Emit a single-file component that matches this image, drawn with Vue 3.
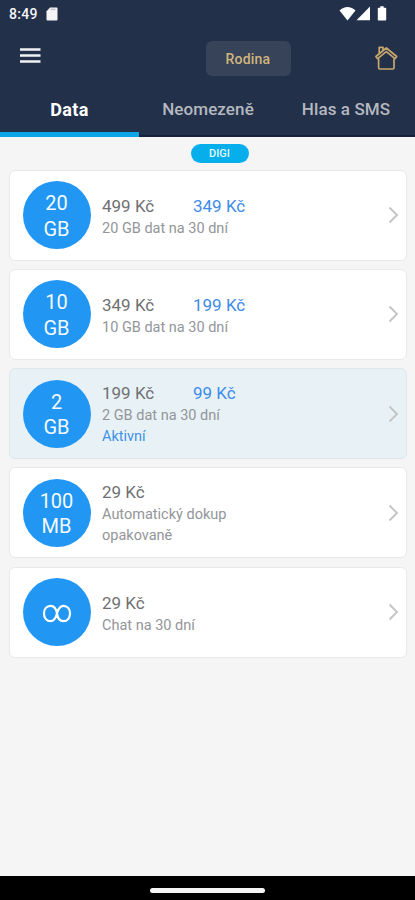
<script setup>
const tabs = ['Data', 'Neomezeně', 'Hlas a SMS']
const plans = [
  { amount: '20', unit: 'GB', price: '499 Kč', sale: '349 Kč', lines: ['20 GB dat na 30 dní'] },
  { amount: '10', unit: 'GB', price: '349 Kč', sale: '199 Kč', lines: ['10 GB dat na 30 dní'] },
  { amount: '2', unit: 'GB', price: '199 Kč', sale: '99 Kč', lines: ['2 GB dat na 30 dní'], status: 'Aktivní' },
  { amount: '100', unit: 'MB', price: '29 Kč', lines: ['Automatický dokup', 'opakovaně'] },
  { infinite: true, price: '29 Kč', lines: ['Chat na 30 dní'] },
]
const isTall = (plan) => plan.lines.length > 1 || Boolean(plan.status)
</script>

<template>
  <div class="screen">
    <header class="header">
      <div class="status-bar">
        <span class="clock">8:49</span>
        <svg class="sd" width="12" height="14" viewBox="0 0 12 14"><path d="M4 .5h6.5a1 1 0 0 1 1 1v11a1 1 0 0 1-1 1h-9a1 1 0 0 1-1-1V4.200z" fill="#f5f5f6" /><path d="M4.500 2.400h5" stroke="#c4c6ca" stroke-width="1.600" /></svg>
        <svg class="signals" width="50" height="16" viewBox="0 0 50 16" fill="#fff">
          <path d="M0.500 4.500C5-.2 12-.2 16.500 4.500L8.500 14.500z" />
          <path d="M31 .5v13.800H17.500z" />
          <path d="M39.800 1.800h1.500V.3h3.400v1.500h1.500c.6 0 1 .4 1 1v10.700c0 .6-.4 1-1 1h-6.400c-.6 0-1-.4-1-1V2.800c0-.6.4-1 1-1z" />
        </svg>
      </div>
      <div class="toolbar">
        <svg class="menu" width="22" height="17" viewBox="0 0 22 17"><path d="M0 2.500h20.500M0 8.500h20.500M0 14.500h20.500" stroke="#f1f1f4" stroke-width="2.600" /></svg>
        <button class="family">Rodina</button>
        <svg class="home" width="24" height="26" viewBox="0 0 24 26" fill="none" stroke="#c9a66c" stroke-width="1.700" stroke-linejoin="round">
          <path d="M4.600 13.500v9.300q0 1.200 1.200 1.200h13q1.200 0 1.200-1.200v-9.300" />
          <path d="M12.300 3L1.900 11.500l1.700 2.200 8.700-7.100 8.700 7.100 1.700-2.200z" />
          <path d="M5.200 8.500V2.300h3.800v3.100" />
        </svg>
      </div>
      <nav class="tabs">
        <div v-for="(tab, i) in tabs" :key="tab" class="tab" :class="{ current: i === 0 }"><span>{{ tab }}</span></div>
      </nav>
    </header>
    <main class="content">
      <span class="brand">DIGI</span>
      <section class="plans">
        <article v-for="(plan, i) in plans" :key="i" class="card" :class="{ active: plan.status }">
          <div class="badge">
            <svg v-if="plan.infinite" width="30" height="20" viewBox="0 0 30 20"><path d="M15 9.500C14.300 4.500 12 1.800 8.500 1.800C4.700 1.800 2 5 2 9.500s2.700 7.700 6.500 7.700c3.500 0 5.300-3 6.500-7.700s3-7.700 6.500-7.700c3.800 0 6.500 3.200 6.500 7.700s-2.700 7.700-6.500 7.700c-3.500 0-5.800-2.700-6.500-7.700z" fill="none" stroke="#fff" stroke-width="2.200" /></svg>
            <template v-else><span>{{ plan.amount }}</span><span>{{ plan.unit }}</span></template>
          </div>
          <div class="details" :class="{ tall: isTall(plan) }">
            <div class="prices"><span class="price">{{ plan.price }}</span><span v-if="plan.sale" class="sale">{{ plan.sale }}</span></div>
            <div v-for="line in plan.lines" :key="line" class="line">{{ line }}</div>
            <div v-if="plan.status" class="line state">{{ plan.status }}</div>
          </div>
          <svg class="chevron" width="11" height="18" viewBox="0 0 11 18"><path d="M1.500 1.500L9 9l-7.500 7.500" fill="none" stroke="#c3c3c3" stroke-width="1.800" /></svg>
        </article>
      </section>
    </main>
    <footer class="gesture"><i></i></footer>
  </div>
</template>

<style>
body { margin: 0; }
</style>

<style scoped>
.screen { width: 415px; height: 900px; display: flex; flex-direction: column; background: #f5f5f5; font-family: Roboto, "Liberation Sans", sans-serif; overflow: hidden; }
.header { height: 137px; flex: none; background: #22304a; display: flex; flex-direction: column; }
.status-bar { height: 28px; display: flex; align-items: center; padding: 0 26.500px 0 9px; box-sizing: border-box; }
.clock { color: #f4f5f7; font-size: 14px; font-weight: 500; width: 37px; letter-spacing: .3px; }
.sd { margin-bottom: 1px; }
.signals { margin-left: auto; margin-bottom: 1px; }
.toolbar { height: 61px; display: grid; grid-template-columns: 186px 85px 1fr; align-items: center; padding: 0 17px 0 20px; }
.menu { margin-top: -7px; }
.family { height: 35px; padding: 0 1px 0 0; border: 0; border-radius: 6px; background: #364359; color: #d0b57d; font: 500 14px Roboto, sans-serif; letter-spacing: .2px; }
.home { justify-self: end; margin-top: -2px; }
.tabs { flex: 1; display: grid; grid-template-columns: 139px 138px 138px; }
.tab { display: flex; justify-content: center; padding-top: 10px; line-height: 21px; color: #b5b8bf; font-size: 17px; font-weight: 500; letter-spacing: .1px; border-bottom: 2px solid #17203a; }
.tab.current { color: #fff; font-size: 18px; font-weight: 700; letter-spacing: .3px; border-bottom: 5px solid #0ca6e8; }
.content { flex: 1; display: flex; flex-direction: column; align-items: center; padding: 7px 8px 0 9px; }
.brand { width: 58px; height: 19px; border-radius: 10px; background: #06aeeb; color: #e5f8ff; font-size: 11px; line-height: 20px; font-weight: 500; text-align: center; margin-left: 23px; }
.plans { align-self: stretch; margin-top: 6.500px; display: flex; flex-direction: column; gap: 8.300px; }
.card { height: 91px; box-sizing: border-box; border: 1.500px solid #e9e9e9; border-radius: 6px; background: #fff; display: flex; align-items: center; padding: 0 7px 0 12.500px; }
.card.active { background: #e8f2f6; border-color: #dfe7ea; }
.badge { width: 68px; height: 68px; flex: none; border-radius: 50%; background: #2196f3; color: #f4faff; display: flex; flex-direction: column; align-items: center; justify-content: center; font-size: 20px; line-height: 25.500px; padding-top: 3px; box-sizing: border-box; }
.details { flex: 1; margin-left: 11.500px; padding-top: 3.500px; }
.details.tall { padding-top: 1.500px; }
.prices { display: flex; height: 23px; line-height: 23px; font-size: 17px; }
.price { width: 91px; color: #707073; }
.sale { color: #3d8cea; }
.line { font-size: 14.500px; line-height: 21px; color: #939599; }
.state { color: #3e93e8; }
.gesture { height: 24px; flex: none; background: #000; display: flex; justify-content: center; align-items: center; box-sizing: border-box; padding-top: 4px; }
.gesture i { width: 115px; height: 5px; border-radius: 3px; background: #f5f5f5; }
</style>
